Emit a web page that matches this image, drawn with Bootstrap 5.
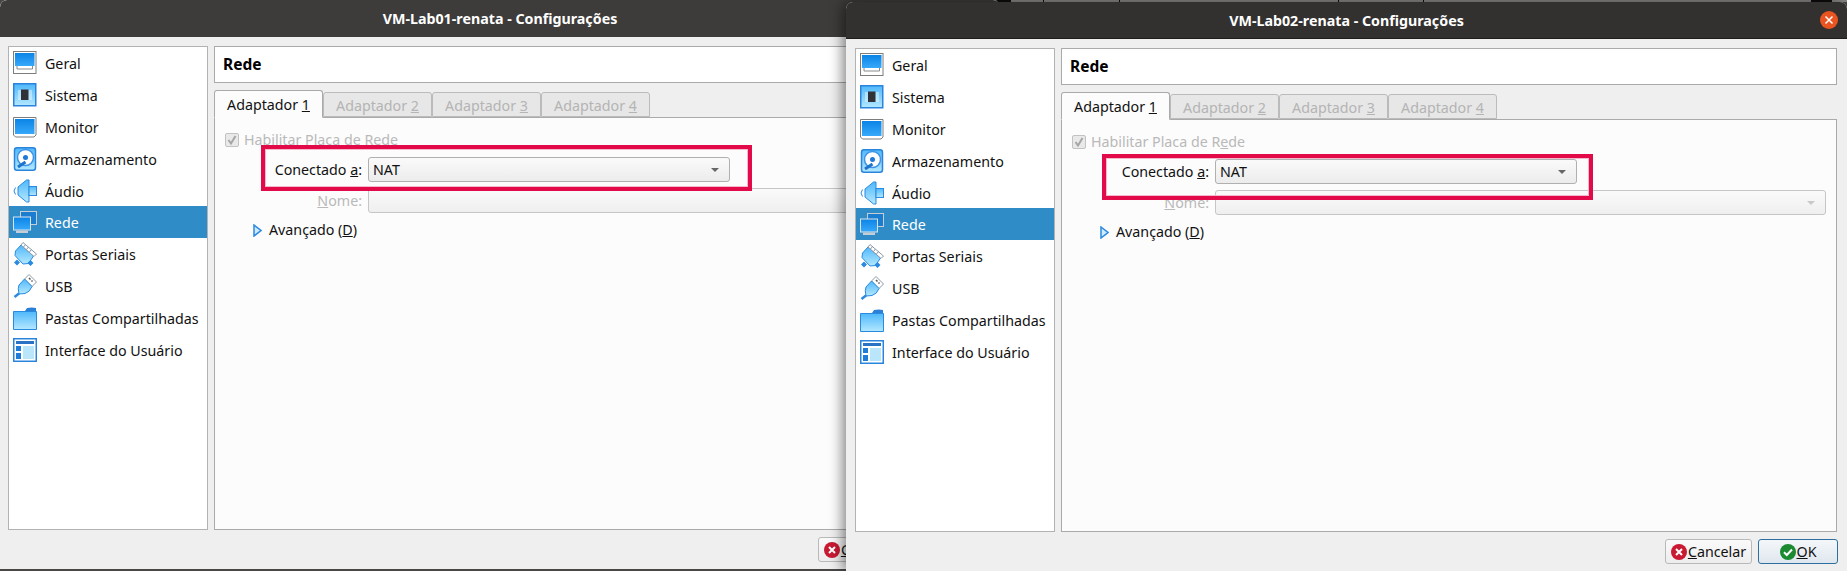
<!DOCTYPE html>
<html lang="pt-BR">

<head>
  <meta charset="UTF-8" />
  <meta name="viewport" content="width=device-width, initial-scale=1.0" />
  <title>VM Configurações</title>

  <link href="https://cdn.jsdelivr.net/npm/bootstrap@5.3.3/dist/css/bootstrap.min.css" rel="stylesheet" />

  <style>
    body {
      margin: 0;
      width: 1847px;
      height: 571px;
      overflow: hidden;
      position: relative;
      background: #4a4846;
      font-family: "Noto Sans", "Open Sans", sans-serif;
      font-size: 14.25px;
      color: #111;
    }

    /* Windows on the desktop */
    .vm-window {
      position: absolute;
      height: 569px;
      display: flex;
      flex-direction: column;
      background: #efefef;
      border-radius: 7px 7px 0 0;
      overflow: hidden;
    }

    .vm-back { left: 0; top: 0; width: 1000px; }

    .vm-front {
      left: 846px;
      top: 2px;
      width: 1001px;
      box-shadow: -3px 0 14px rgba(0, 0, 0, .5);
      z-index: 2;
      overflow: visible;
    }

    .vm-title {
      height: 37px;
      flex: none;
      display: flex;
      align-items: center;
      justify-content: center;
      padding-top: 1px;
      background: #3d3c3a;
      color: #fff;
      font-weight: 700;
      border-radius: 7px 7px 0 0;
      position: relative;
    }

    .vm-front .vm-title { background: #333130; height: 36.5px; border-bottom: 1px solid #1e1d1c; }

    .vm-close {
      position: absolute;
      right: 9px;
      top: 9px;
      width: 18px;
      height: 18px;
    }

    .vm-body {
      flex: 1;
      min-height: 0;
      display: flex;
      gap: 6px;
      padding: 9px 9px 0 8px;
    }

    .vm-front .vm-body { padding: 9.5px 10px 0 9px; }

    .vm-side {
      width: 200px;
      flex: none;
      background: #fff;
      border: 1px solid #b2b2b2;
      border-radius: 0;
      align-self: stretch;
      margin-bottom: 0;
    }

    .vm-side .list-group-item {
      height: 32px;
      padding: 0 0 0 4px;
      display: flex;
      align-items: center;
      gap: 8px;
      border: 0;
      border-radius: 0;
      background: transparent;
      color: #111;
      white-space: nowrap;
    }

    .vm-side .list-group-item.active { background: #308cc6; color: #fff; }

    .vm-side svg { width: 24px; height: 24px; flex: none; }

    .vm-side-name { padding-top: 2px; }

    .vm-main { flex: 1; min-width: 0; display: flex; flex-direction: column; }

    .vm-head {
      height: 37px;
      flex: none;
      display: flex;
      align-items: center;
      padding-left: 8px;
      background: #fff;
      border: 1px solid #aaa;
      font-weight: 700;
      font-size: 15.5px;
      color: #000;
    }

    /* Tabs */
    .vm-tabs {
      margin-top: 7px;
      height: 28px;
      flex: none;
      border: 0;
      align-items: flex-end;
      flex-wrap: nowrap;
      position: relative;
      z-index: 1;
    }

    .vm-tabs .nav-link {
      width: 109px;
      height: 25px;
      margin: 0 0 1px;
      padding: 2px 0 0;
      display: flex;
      align-items: center;
      justify-content: center;
      background: #e7e7e7;
      border: 1px solid #bbb;
      border-radius: 3px 3px 0 0;
      color: #b4b4b4;
      white-space: nowrap;
    }

    .vm-tabs .nav-link.active {
      height: 28px;
      margin-bottom: 0;
      background: #fcfcfc;
      border-color: #aaa #aaa #fcfcfc;
      color: #111;
    }

    .vm-pane {
      flex: 1;
      margin-top: -1px;
      padding: 9px 10px 0;
      background: #fcfcfc;
      border: 1px solid #aaa;
    }

    .vm-row { display: flex; align-items: center; gap: 6px; height: 25px; }

    .vm-row-nat { margin-top: 5px; }
    .vm-row-name { margin-top: 6px; }

    .vm-label { width: 137px; flex: none; text-align: right; white-space: nowrap; }

    .vm-off { color: #b9b9b9; }

    .form-check-input.vm-check,
    .form-check-input.vm-check:checked {
      width: 14px;
      height: 14px;
      margin: 0 -1px 0 0;
      flex: none;
      opacity: 1;
      border-color: #c2c2c2;
      border-radius: 2px;
      background-color: #e9e9e9;
      background-image: url("data:image/svg+xml,%3csvg xmlns='http://www.w3.org/2000/svg' viewBox='0 0 14 14'%3e%3cpath fill='none' stroke='%23a6a6a6' stroke-width='2' d='M3.5 7l2.5 3.5 4.5-7.5'/%3e%3c/svg%3e");
      background-size: 14px;
    }

    .vm-combo {
      height: 25px;
      padding: 0 10px 0 4px;
      display: flex;
      align-items: center;
      justify-content: space-between;
      background: linear-gradient(#fafafa, #ececec);
      border: 1px solid #b0b0b0;
      border-radius: 3px;
      color: #111;
      font-size: 14.25px;
      text-align: left;
    }

    .vm-combo.dropdown-toggle::after,
    .vm-combo.dropdown-toggle:empty::after {
      margin: 0 0 0 auto;
      border-top: 4px solid #666;
      border-left: 4.5px solid transparent;
      border-right: 4.5px solid transparent;
      border-bottom: 0;
    }

    .vm-combo:disabled {
      opacity: 1;
      background: linear-gradient(#fafafa, #efefef);
      border-color: #c6c6c6;
    }

    .vm-combo.dropdown-toggle:disabled::after { border-top-color: #c8c8c8; }

    .vm-combo-nat { width: 362px; flex: none; }
    .vm-combo-name { flex: 1; }

    .vm-more { display: flex; align-items: center; gap: 7px; margin: 7px 0 0 28px; height: 20px; white-space: nowrap; }

    .vm-foot {
      height: 39px;
      flex: none;
      display: flex;
      justify-content: flex-end;
      align-items: flex-start;
      gap: 6px;
      padding: 7px 9px 0 0;
    }

    .vm-btn {
      height: 25px;
      padding: 0;
      display: flex;
      align-items: center;
      justify-content: center;
      gap: 1px;
      font-size: 14.25px;
      color: #111;
      background: linear-gradient(#fafafa, #ededed);
      border: 1px solid #b9b9b9;
      border-radius: 3px;
    }

    .vm-btn svg { width: 16px; height: 16px; flex: none; }
    .vm-cancel { width: 87px; }
    .vm-ok { width: 80px; border-color: #2f6f9f; background: linear-gradient(#f4f7fa, #dfe7ee); }

    /* Red marker drawn over the screenshot */
    .vm-mark {
      position: absolute;
      width: 491px;
      height: 46px;
      border: 4px solid #e20a48;
      box-shadow: inset 0 0 0 1px #f6b9cb;
      pointer-events: none;
      z-index: 3;
    }

    /* Bits of the desktop above the front window */
    .vm-strip { position: absolute; top: 0; height: 2px; background: #8b8986; }
    .vm-strip-dark { background: #0d0d0d; }
  </style>
</head>

<body>
  <svg width="0" height="0" class="position-absolute">
    <defs>
      <linearGradient id="screen" x1="0" y1="0" x2="0" y2="1"><stop offset="0" stop-color="#0a84e6" /><stop offset="1" stop-color="#38a9fb" /></linearGradient>
      <linearGradient id="pale" x1="0" y1="0" x2="0" y2="1"><stop offset="0" stop-color="#4fb8fb" /><stop offset="1" stop-color="#b4e8ff" /></linearGradient>
      <symbol id="ic-geral" viewBox="0 0 24 24">
        <rect x=".5" y=".5" width="22.5" height="22" fill="#fff" stroke="#7d7d7d" />
        <rect x="2" y="2" width="19.5" height="13" fill="url(#screen)" />
        <path d="M4 15v3h15.500v-3" fill="none" stroke="#8a8a8a" />
      </symbol>
      <symbol id="ic-sistema" viewBox="0 0 24 24">
        <rect x=".75" y=".75" width="22" height="22" fill="url(#pale)" stroke="#2a84dc" stroke-width="1.500" />
        <path d="M5 8h14M5 10h14M5 12h14M5 14h14M5 16h14" stroke="#eaf7ff" />
        <rect x="8" y="6.500" width="7.500" height="10.500" fill="#2f3338" />
      </symbol>
      <symbol id="ic-monitor" viewBox="0 0 24 24">
        <path d="M.5 2.500h22.500v17.500l-2 2h-18.500l-2-2z" fill="#fff" stroke="#7d7d7d" />
        <rect x="2" y="4" width="19.500" height="15" fill="url(#screen)" />
      </symbol>
      <symbol id="ic-disco" viewBox="0 0 24 24">
        <rect x="1.500" y=".750" width="21" height="22.500" rx="2.500" fill="url(#pale)" stroke="#2a84dc" stroke-width="1.500" />
        <circle cx="12.500" cy="10.500" r="8" fill="#fff" stroke="#3e93e6" stroke-width="1.500" />
        <circle cx="12.500" cy="10.500" r="2.500" fill="#1f79d8" />
        <path d="M5 20l7.500-5" stroke="#1f73cc" stroke-width="3" />
      </symbol>
      <symbol id="ic-audio" viewBox="0 0 24 24">
        <path d="M2.500 8.500q-3 3.500 0 7" fill="none" stroke="#2a8ae0" />
        <path d="M5 8l8.500-7h2.500v22h-2.500l-8.500-7z" fill="url(#pale)" stroke="#2a8ae0" />
        <rect x="16" y="7.500" width="7.500" height="9" fill="url(#pale)" stroke="#2a8ae0" />
      </symbol>
      <symbol id="ic-rede" viewBox="0 0 24 24">
        <rect x="7.500" y="1.500" width="16" height="13" fill="#1b7dd0" stroke="#c5ced6" />
        <rect x=".5" y="7" width="17" height="13" fill="url(#screen)" stroke="#dbe3e9" />
        <path d="M3 20.500h12v2.500h-12z" fill="#c5ced6" />
      </symbol>
      <symbol id="ic-serial" viewBox="0 0 24 24">
        <path d="M8 3l12.500 11-5 7.500-5.500.5-8-8.500.5-4.500z" fill="url(#pale)" stroke="#2a8ae0" />
        <path d="M10 .5l13.500 11.500-2.500 2.500-13-11.500z" fill="#fff" stroke="#8a98a4" />
        <path d="M12.500 2.500l-2 2.500M15.500 5l-2 2.500M18.500 7.500l-2 2.500" stroke="#8a98a4" />
        <path d="M4 17.500l3 3-3 3-3-3zM17.500 18l3 3-3 3-3-3z" fill="#2a8ae0" />
      </symbol>
      <symbol id="ic-usb" viewBox="0 0 24 24">
        <path d="M16 .5l7.500 7.500-4.500 4.500-7.500-7.500z" fill="#fff" stroke="#8a98a4" />
        <path d="M16 4l1.500 1.500M18.500 6.500l1 1" stroke="#555" stroke-width="1.500" />
        <path d="M11.500 5l7.500 7.500q-2 5.500-7 7l-6 .5q-1.500-6 0-9z" fill="url(#pale)" stroke="#2a8ae0" />
        <path d="M6 19.500l-4.500 3.500" stroke="#2a8ae0" stroke-width="2.500" />
      </symbol>
      <symbol id="ic-pasta" viewBox="0 0 24 24">
        <path d="M1 5h11l2-3q5-1 9 0v4z" fill="#2a7fd6" />
        <path d="M.5 5.500h23v18h-23z" fill="url(#pale)" stroke="#2a8ae0" />
      </symbol>
      <symbol id="ic-ui" viewBox="0 0 24 24">
        <rect x=".75" y=".75" width="22.500" height="22.500" fill="#fff" stroke="#2a84dc" stroke-width="1.500" />
        <rect x="3" y="3" width="18" height="3" fill="#2a72c4" />
        <rect x="10" y="8" width="11" height="13" fill="#b9e6fb" />
        <path d="M3 8h5v5h-5zM3 15h5v6h-5z" fill="#1f7cd8" />
      </symbol>
      <symbol id="ic-cancel" viewBox="0 0 16 16">
        <circle cx="8" cy="8" r="8" fill="#c91a34" />
        <path d="M5 5l6 6M11 5l-6 6" stroke="#fff" stroke-width="2" />
      </symbol>
      <symbol id="ic-ok" viewBox="0 0 16 16">
        <circle cx="8" cy="8" r="8" fill="#1b8a32" />
        <path d="M4 8.300l2.800 2.700 5.200-5.500" fill="none" stroke="#fff" stroke-width="2" />
      </symbol>
    </defs>
  </svg>

  <div class="vm-strip" style="left: 1000px; width: 847px"></div>
  <div class="vm-strip vm-strip-dark" style="left: 997px; width: 14px"></div>
  <div class="vm-strip vm-strip-dark" style="left: 1043px; width: 1px"></div>
  <div class="vm-strip vm-strip-dark" style="left: 1119px; width: 1px"></div>
  <div class="vm-strip vm-strip-dark" style="left: 1338px; width: 1px"></div>
  <div class="vm-strip vm-strip-dark" style="left: 1423px; width: 1px"></div>
  <div class="vm-strip vm-strip-dark" style="left: 1811px; width: 21px"></div>

  <div id="desktop"></div>

  <script src="https://cdn.jsdelivr.net/npm/bootstrap@5.3.3/dist/js/bootstrap.bundle.min.js"></script>

  <script>
    // Left column of the settings dialog
    const sections = [
      { name: "Geral", icon: "ic-geral" },
      { name: "Sistema", icon: "ic-sistema" },
      { name: "Monitor", icon: "ic-monitor" },
      { name: "Armazenamento", icon: "ic-disco" },
      { name: "Áudio", icon: "ic-audio" },
      { name: "Rede", icon: "ic-rede", active: true },
      { name: "Portas Seriais", icon: "ic-serial" },
      { name: "USB", icon: "ic-usb" },
      { name: "Pastas Compartilhadas", icon: "ic-pasta" },
      { name: "Interface do Usuário", icon: "ic-ui" }
    ];

    // The two dialogs, markX and markY place the red box on each one
    const windows = [
      { title: "VM-Lab01-renata - Configurações", cls: "vm-back", markX: 261, markY: 145, close: false },
      { title: "VM-Lab02-renata - Configurações", cls: "vm-front", markX: 256, markY: 152, close: true }
    ];

    function icon(id) {
      return `<svg aria-hidden="true"><use href="#${id}"></use></svg>`;
    }

    function renderWindow(win) {
      const items = sections.map(s => `
        <a href="#" class="list-group-item list-group-item-action ${s.active ? "active" : ""}">${icon(s.icon)}<span class="vm-side-name">${s.name}</span></a>
      `).join("");

      const tabs = [1, 2, 3, 4].map(n => `
        <li class="nav-item"><a href="#" class="nav-link ${n === 1 ? "active" : ""}">Adaptador&nbsp;<u>${n}</u></a></li>
      `).join("");

      return `
        <div class="vm-window ${win.cls}">
          <div class="vm-title">${win.title}
            ${win.close ? `<svg class="vm-close" viewBox="0 0 18 18"><circle cx="9" cy="9" r="9" fill="#e95420"/><path d="M5.500 5.500l7 7M12.500 5.500l-7 7" stroke="#fff" stroke-width="1.500"/></svg>` : ""}
          </div>
          <div class="vm-body">
            <div class="list-group vm-side">${items}</div>
            <div class="vm-main">
              <div class="vm-head">Rede</div>
              <ul class="nav nav-tabs vm-tabs">${tabs}</ul>
              <div class="vm-pane">
                <div class="vm-row vm-off">
                  <input class="form-check-input vm-check" type="checkbox" checked disabled />
                  <span>Habilitar Placa de R<u>e</u>de</span>
                </div>
                <div class="vm-row vm-row-nat">
                  <span class="vm-label">Conectado <u>a</u>:</span>
                  <button type="button" class="btn dropdown-toggle vm-combo vm-combo-nat">NAT</button>
                </div>
                <div class="vm-row vm-row-name">
                  <span class="vm-label vm-off"><u>N</u>ome:</span>
                  <button type="button" class="btn dropdown-toggle vm-combo vm-combo-name" disabled></button>
                </div>
                <div class="vm-more">
                  <svg width="9" height="13" viewBox="0 0 9 13"><path d="M1 1l7 5.500-7 5.500z" fill="#cfeaff" stroke="#2a8ae0" stroke-width="1.500"/></svg>
                  <span>Avançado (<u>D</u>)</span>
                </div>
              </div>
            </div>
          </div>
          <div class="vm-foot">
            <button type="button" class="btn vm-btn vm-cancel">${icon("ic-cancel")}<span><u>C</u>ancelar</span></button>
            <button type="button" class="btn vm-btn vm-ok">${icon("ic-ok")}<span><u>O</u>K</span></button>
          </div>
          <div class="vm-mark" style="left: ${win.markX}px; top: ${win.markY}px"></div>
        </div>
      `;
    }

    document.getElementById("desktop").innerHTML = windows.map(renderWindow).join("");
  </script>
</body>

</html>
